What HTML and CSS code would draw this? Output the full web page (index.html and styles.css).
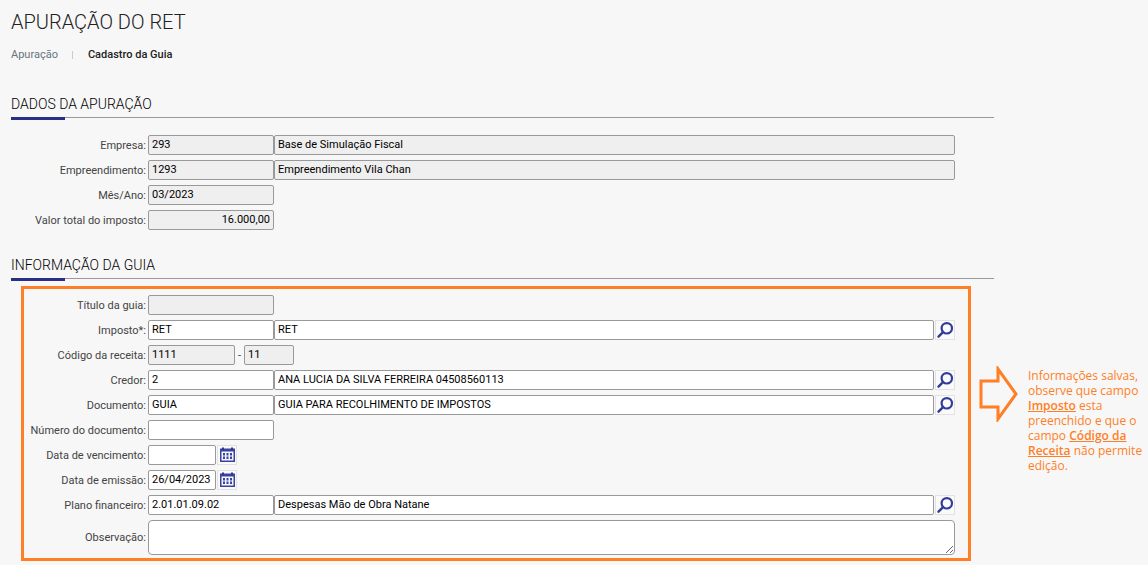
FILE: index.html
```html
<!DOCTYPE html>
<html lang="pt-BR">
  <head>
    <meta charset="UTF-8" />
    <meta name="viewport" content="width=device-width, initial-scale=1.0" />
    <title>Apuração do RET</title>
    <link rel="stylesheet" href="styles.css">
  </head>
  <body>
    <svg class="sprite" aria-hidden="true">
      <symbol id="icon-search" viewBox="0 0 18 18">
        <circle cx="10.8" cy="7.3" r="5.200" fill="none" stroke="#343c98" stroke-width="2.2" />
        <path d="M7 11.200 2.500 15.700" fill="none" stroke="#343c98" stroke-width="2.4" stroke-linecap="round" />
      </symbol>
      <symbol id="icon-calendar" viewBox="0 0 18 18">
        <path d="M2 2.500h15v13.500H2z" fill="#3a42a0" />
        <path d="M4 1.500h2V4H4zM13 1.500h2V4h-2z" fill="#2e3590" />
        <path d="M3.500 5.500h12v9h-12z" fill="#f4f4fb" />
        <path d="M5 7h2v2.500H5zM8.500 7h2v2.500h-2zM12 7h2v2.500h-2zM5 10.500h2v2.500H5zM8.500 10.500h2v2.500h-2zM12 10.500h2v2.500h-2z" fill="#3a42a0" />
      </symbol>
    </svg>

    <main>
      <h1>APURAÇÃO DO RET</h1>
      <nav class="Breadcrumb">
        <a href="#apuracao">Apuração</a>
        <span class="Current">Cadastro da Guia</span>
      </nav>

      <form>
        <section>
          <h2>DADOS DA APURAÇÃO</h2>
          <div class="Fields Fields-summary">
            <div class="Row">
              <label for="empresa">Empresa:</label>
              <input id="empresa" class="Code" value="293" readonly />
              <input class="Description" aria-label="Nome da empresa" value="Base de Simulação Fiscal" readonly />
            </div>
            <div class="Row">
              <label for="empreendimento">Empreendimento:</label>
              <input id="empreendimento" class="Code" value="1293" readonly />
              <input class="Description" aria-label="Nome do empreendimento" value="Empreendimento Vila Chan" readonly />
            </div>
            <div class="Row">
              <label for="mes">Mês/Ano:</label>
              <input id="mes" class="Code" value="03/2023" readonly />
            </div>
            <div class="Row">
              <label for="valor">Valor total do imposto:</label>
              <input id="valor" class="Code Amount" value="16.000,00" readonly />
            </div>
          </div>
        </section>

        <section>
          <h2>INFORMAÇÃO DA GUIA</h2>
          <div class="Annotated">
            <div class="Fields Frame">
              <div class="Row">
                <label for="titulo">Título da guia:</label>
                <input id="titulo" class="Code" readonly />
              </div>
              <div class="Row">
                <label for="imposto">Imposto*:</label>
                <input id="imposto" class="Code" value="RET" />
                <input class="Description" aria-label="Descrição do imposto" value="RET" />
                <button type="button" class="IconButton" aria-label="Pesquisar imposto"><svg><use href="#icon-search" /></svg></button>
              </div>
              <div class="Row">
                <label for="receita">Código da receita:</label>
                <input id="receita" class="Revenue" value="1111" readonly />
                <span class="Dash">-</span>
                <input class="Variation" aria-label="Variação da receita" value="11" readonly />
              </div>
              <div class="Row">
                <label for="credor">Credor:</label>
                <input id="credor" class="Code" value="2" />
                <input class="Description" aria-label="Nome do credor" value="ANA LUCIA DA SILVA FERREIRA 04508560113" />
                <button type="button" class="IconButton" aria-label="Pesquisar credor"><svg><use href="#icon-search" /></svg></button>
              </div>
              <div class="Row">
                <label for="documento">Documento:</label>
                <input id="documento" class="Code" value="GUIA" />
                <input class="Description" aria-label="Descrição do documento" value="GUIA PARA RECOLHIMENTO DE IMPOSTOS" />
                <button type="button" class="IconButton" aria-label="Pesquisar documento"><svg><use href="#icon-search" /></svg></button>
              </div>
              <div class="Row">
                <label for="numero">Número do documento:</label>
                <input id="numero" class="Code" />
              </div>
              <div class="Row">
                <label for="vencimento">Data de vencimento:</label>
                <input id="vencimento" class="Date" />
                <button type="button" class="IconButton" aria-label="Escolher vencimento"><svg><use href="#icon-calendar" /></svg></button>
              </div>
              <div class="Row">
                <label for="emissao">Data de emissão:</label>
                <input id="emissao" class="Date" value="26/04/2023" />
                <button type="button" class="IconButton" aria-label="Escolher emissão"><svg><use href="#icon-calendar" /></svg></button>
              </div>
              <div class="Row">
                <label for="plano">Plano financeiro:</label>
                <input id="plano" class="Code" value="2.01.01.09.02" />
                <input class="Description" aria-label="Descrição do plano financeiro" value="Despesas Mão de Obra Natane" />
                <button type="button" class="IconButton" aria-label="Pesquisar plano financeiro"><svg><use href="#icon-search" /></svg></button>
              </div>
              <div class="Row">
                <label for="observacao">Observação:</label>
                <textarea id="observacao"></textarea>
              </div>
            </div>

            <aside class="Callout">
              <svg class="Arrow" viewBox="0 0 39 56" aria-hidden="true">
                <path d="M2 15h17V3l18 25-18 25V41H2z" fill="none" stroke="#ff7f27" stroke-width="3" />
              </svg>
              <p>Informações salvas, observe que campo <strong>Imposto</strong> esta preenchido e que o campo <strong>Código da Receita</strong> não permite edição.</p>
            </aside>
          </div>
        </section>
      </form>
    </main>
  </body>
</html>
```

FILE: styles.css
```css
:root {
  --color-page: #f7f7f7;
  --color-text: #444;
  --color-dark: #222;
  --color-border: #999;
  --color-accent: #2b2f84;
  --color-note: #ff7f27;
}

* {
  box-sizing: border-box;
}

body {
  margin: 0;
  font-family: Roboto, sans-serif;
  font-size: 11px;
  color: var(--color-text);
  background-color: var(--color-page);
}

.sprite {
  display: none;
}

main {
  padding: 10px 0 0 11px;
}

h1 {
  margin: 0;
  font-size: 20px;
  line-height: 24px;
  font-weight: 300;
  color: var(--color-dark);
}

.Breadcrumb {
  display: flex;
  align-items: center;
  margin-top: 13px;
  line-height: 16px;
}

.Breadcrumb a {
  color: #66757f;
  text-decoration: none;
}

.Breadcrumb .Current {
  display: flex;
  align-items: center;
  font-weight: 500;
  color: var(--color-dark);
}

.Current::before {
  content: "";
  width: 1px;
  height: 8px;
  margin: 0 15px 0 14px;
  background-color: #ccc;
}

h2 {
  margin: 0 154px 0 0;
  font-size: 14px;
  line-height: 20px;
  font-weight: 300;
  color: #000;
  border-bottom: 1px solid var(--color-border);
}

/* accent bar that starts on the rule under the title */
h2::after {
  content: "";
  display: block;
  width: 54px;
  height: 3px;
  margin: 3px 0 -3px;
  background-color: var(--color-accent);
}

section {
  padding-top: 31px;
}

section + section {
  padding-top: 25px;
}

.Fields {
  display: flex;
  flex-direction: column;
  gap: 5px;
}

.Fields-summary {
  padding: 17px 193px 0 13px;
}

.Row {
  display: flex;
  align-items: center;
}

.Row label {
  flex: none;
  width: 122px;
  margin-right: 2px;
  text-align: right;
  white-space: nowrap;
}

input,
textarea {
  font: inherit;
  color: #000;
  background-color: #fff;
  border: 1px solid var(--color-border);
  border-radius: 2px;
}

input {
  height: 20px;
  padding: 0 3px 1px;
}

input:read-only {
  background-color: #efefef;
}

.Code {
  width: 126px;
}

.Amount {
  text-align: right;
}

.Description {
  flex: 1;
  min-width: 0;
}

.Revenue {
  width: 87px;
}

.Dash {
  width: 9px;
  text-align: center;
}

.Variation {
  width: 50px;
}

.Date {
  width: 68px;
}

textarea {
  flex: 1;
  height: 35px;
  border-radius: 4px;
}

.IconButton {
  width: 20px;
  height: 20px;
  margin-left: 1px;
  padding: 0;
  background-color: #fafafa;
  border: 1px solid #e2e2e2;
}

.IconButton svg {
  display: block;
  width: 18px;
  height: 18px;
}

.Annotated {
  display: flex;
  align-items: flex-start;
  gap: 8px;
  padding: 7px 0 0 10px;
}

.Frame {
  flex: 1;
  padding: 6px 13px 3px 0;
  border: 3px solid var(--color-note);
}

.Callout {
  display: flex;
  align-items: flex-start;
  flex: none;
  width: 169px;
  padding-top: 80px;
  color: var(--color-note);
}

.Arrow {
  flex: none;
  width: 39px;
  height: 56px;
}

.Callout p {
  margin: 2px 0 0 10px;
  font-family: "Open Sans", sans-serif;
  font-size: 12px;
  line-height: 15px;
}

.Callout strong {
  font-weight: 600;
  text-decoration: underline;
}
```
